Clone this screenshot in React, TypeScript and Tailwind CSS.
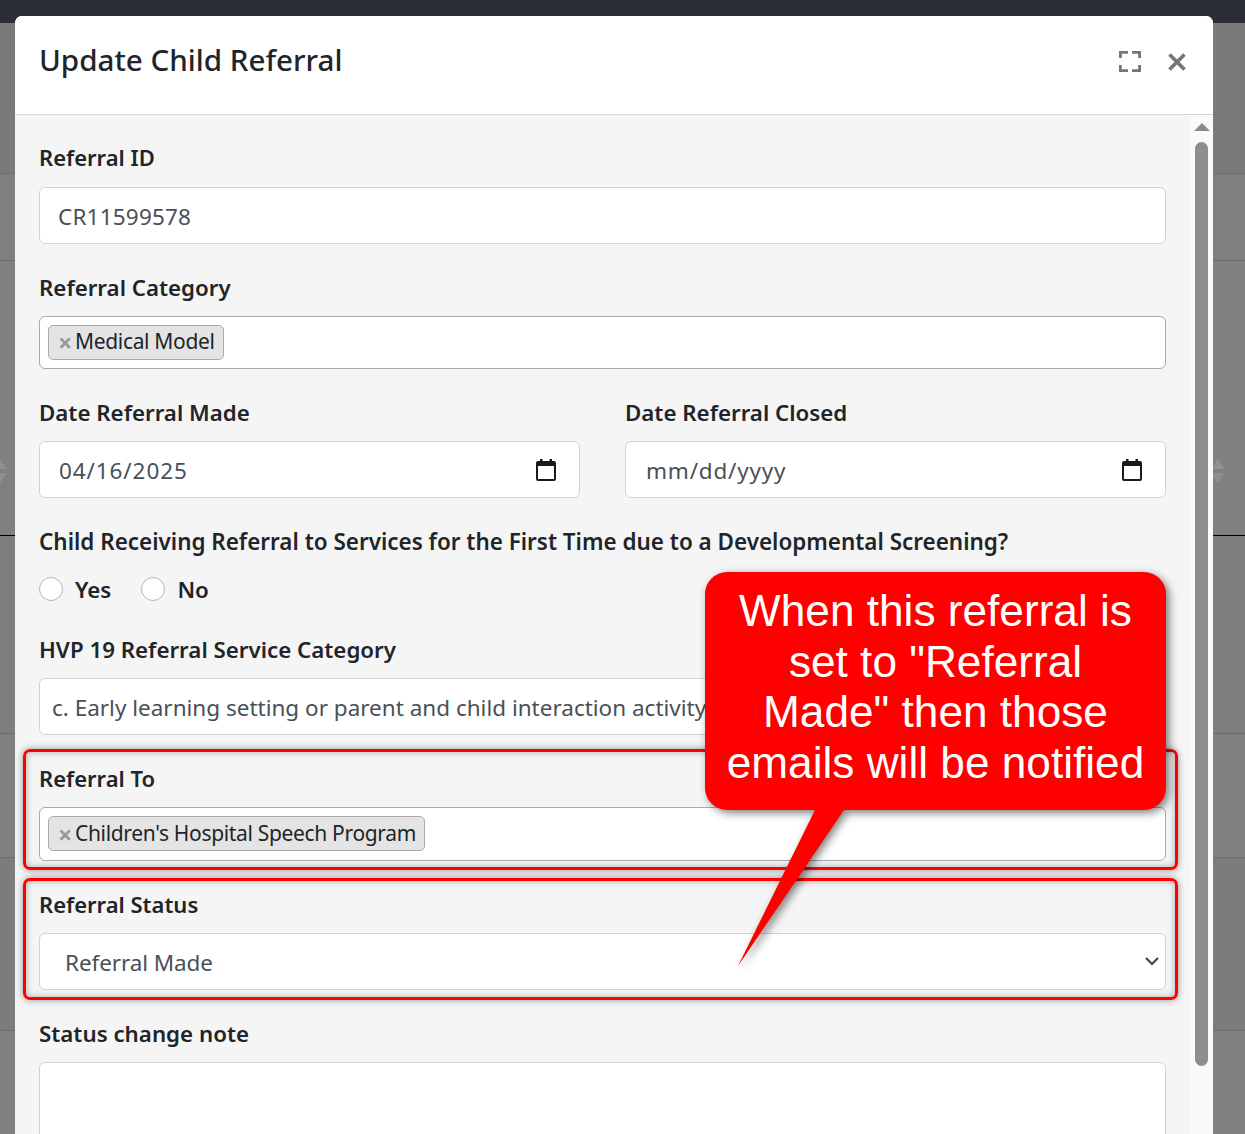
const font = { fontFamily: '"Noto Sans", "Open Sans", sans-serif' };

function Label({ children, className = "text-[22.300px]" }: { children: React.ReactNode; className?: string }) {
  return <div className={`h-[24px] mb-[16px] leading-[24px] font-semibold text-[#212529] whitespace-nowrap ${className}`}>{children}</div>;
}

function TextBox({ children, className = "" }: { children?: React.ReactNode; className?: string }) {
  return (
    <div className={`h-[57px] pt-[2px] bg-white border border-[#ced4da] rounded-[6px] flex items-center text-[22.5px] text-[#495057] whitespace-nowrap ${className}`}>
      {children}
    </div>
  );
}

function Chip({ text, className = "h-[53px]" }: { text: string; className?: string }) {
  return (
    <div className={`bg-white border border-[#aaaaaa] rounded-[6px] flex items-center pl-[8px] ${className}`}>
      <div className="h-[35px] -mt-[1px] flex items-center bg-[#e4e4e4] border border-[#aaaaaa] rounded-[5px] pl-[9px] pr-[8px] text-[21px] tracking-[-0.33px] text-[#212529] whitespace-nowrap">
        <span className="text-[#999999] font-bold mr-[3px] text-[25px] leading-[24px]">×</span>
        {text}
      </div>
    </div>
  );
}

function CalendarIcon() {
  return (
    <svg width="20" height="22" viewBox="0 0 20 22" className="absolute right-[23px] top-[17px]">
      <path d="M4 0h2.500v2h7V0H16v2h2a2 2 0 0 1 2 2v16a2 2 0 0 1-2 2H2a2 2 0 0 1-2-2V4a2 2 0 0 1 2-2h2z M2 7v13h16V7z" fill="#1a1a1a" fillRule="evenodd" />
    </svg>
  );
}

function Radio({ label }: { label: string }) {
  return (
    <div className="flex items-center">
      <span className="w-[24px] h-[24px] rounded-full bg-white border border-[#adb5bd]" />
      <span className="ml-[12px] pt-[2px] text-[22.3px] font-semibold text-[#212529]">{label}</span>
    </div>
  );
}

function Backdrop() {
  return (
    <div className="h-[1134px] flex flex-col bg-[#7b7b7b]">
      <div className="h-[23px] bg-[#2a2d33]" />
      <div className="h-[151px] bg-[#7a7a7a] border-b border-[#6f6f6f]" />
      <div className="h-[87px] bg-[#7f7f7f] border-b border-[#6c6c6c]" />
      <div className="h-[275px] bg-[#808080] border-b border-black" />
      <div className="h-[198px] bg-[#7e7e7e] border-b border-[#6c6c6c]" />
      <div className="h-[124px] bg-[#808080] border-b border-[#6c6c6c]" />
      <div className="h-[173px] bg-[#7c7c7c] border-b border-[#6c6c6c]" />
      <div className="flex-1 bg-[#808080]" />
    </div>
  );
}

function SortArrows({ className }: { className: string }) {
  return (
    <svg width="14" height="24" viewBox="0 0 14 24" className={`absolute top-[459px] ${className}`}>
      <path d="M7 0l7 10H0zM7 24L0 14h14z" fill="#8f8f8f" />
    </svg>
  );
}

function ModalHeader() {
  return (
    <div className="h-[99px] shrink-0 bg-white border-b border-[#d5d5da] flex items-start justify-between pl-[24px] pr-[27px]">
      <div className="mt-[24px] text-[29.6px] leading-[40px] font-medium text-[#212529]">Update Child Referral</div>
      <div className="flex items-center gap-[27px] mt-[35px]">
        <svg width="22" height="21" viewBox="0 0 22 21" fill="none" stroke="#757575" strokeWidth="2.800">
          <path d="M1.400 7V1.400H9M13 1.400h7.600V7M20.600 14v5.600H13M9 19.600H1.400V14" />
        </svg>
        <svg width="18" height="18" viewBox="0 0 18 18" fill="none" stroke="#757575" strokeWidth="3.600">
          <path d="M1.500 1.500l15 15M16.500 1.500l-15 15" />
        </svg>
      </div>
    </div>
  );
}

function Scrollbar() {
  return (
    <div className="w-[23px] shrink-0 bg-[#fafafa] flex flex-col items-center pt-[8px]">
      <svg width="16" height="8" viewBox="0 0 16 8" className="shrink-0">
        <path d="M8 0l8 8H0z" fill="#8a8a8a" />
      </svg>
      <div className="w-[13px] h-[924px] mt-[11px] rounded-full bg-[#8e8e8e] shrink-0" />
    </div>
  );
}

function ReferralForm() {
  return (
    <div className="flex-1 min-w-0 bg-[#f5f5f5] pl-[24px] pr-[24px] pt-[31px]">
      <Label className="text-[22px] !mb-[17px] -translate-y-[1px]">Referral ID</Label>
      <TextBox className="pl-[18px] mb-[32px] tracking-[0.2px]">CR11599578</TextBox>

      <Label>Referral Category</Label>
      <div className="mb-[32px]"><Chip text="Medical Model" /></div>

      <div className="flex gap-[45px] mb-[32px]">
        <div className="flex-1">
          <Label>Date Referral Made</Label>
          <TextBox className="relative pl-[19px] tracking-[0.9px]">04/16/2025<CalendarIcon /></TextBox>
        </div>
        <div className="flex-1">
          <Label>Date Referral Closed</Label>
          <TextBox className="relative pl-[20px] tracking-[0.8px]">mm/dd/yyyy<CalendarIcon /></TextBox>
        </div>
      </div>

      <Label className="text-[22.45px]">Child Receiving Referral to Services for the First Time due to a Developmental Screening?</Label>
      <div className="flex gap-[30px] h-[24px] mt-[23px] mb-[37px]">
        <Radio label="Yes" />
        <Radio label="No" />
      </div>

      <Label>HVP 19 Referral Service Category</Label>
      <TextBox className="pl-[12px] mb-[32px]">c. Early learning setting or parent and child interaction activity</TextBox>

      <Label className="text-[22px] -translate-y-[1px]">Referral To</Label>
      <div className="mb-[32px]"><Chip text="Children's Hospital Speech Program" className="h-[54px]" /></div>

      <Label className="text-[22px] -translate-y-[1px]">Referral Status</Label>
      <TextBox className="pl-[25px] pr-[6px] justify-between mb-[32px] tracking-[-0.1px]">
        Referral Made
        <svg width="14" height="9" viewBox="0 0 14 9" fill="none" stroke="#3f444a" strokeWidth="2" className="relative -top-[1px]">
          <path d="M1 1l6 6 6-6" />
        </svg>
      </TextBox>

      <Label>Status change note</Label>
      <div className="h-[200px] bg-white border border-[#ced4da] rounded-[6px]" />
    </div>
  );
}

function Callout() {
  return (
    <>
      <svg width="1245" height="1134" viewBox="0 0 1245 1134" className="absolute left-0 top-0 pointer-events-none drop-shadow-[3px_3px_4px_rgba(0,0,0,0.5)]">
        <path d="M727 572H1144a22 22 0 0 1 22 22V788a22 22 0 0 1-22 22H844L738 966L815 810H727a22 22 0 0 1-22-22V594a22 22 0 0 1 22-22z" fill="#ff0000" />
      </svg>
      <div className="absolute left-[705px] top-[586px] w-[461px] text-center text-white text-[44.2px] leading-[50.700px]" style={{ fontFamily: '"Liberation Sans", Arial, sans-serif' }}>
        When this referral is<br />set to "Referral<br />Made" then those<br />emails will be notified
      </div>
    </>
  );
}

export default function App() {
  return (
    <div className="relative w-[1245px] h-[1134px] overflow-hidden" style={font}>
      <Backdrop />
      <SortArrows className="left-[-7px]" />
      <SortArrows className="left-[1211px]" />

      <div className="absolute left-[15px] top-[16px] w-[1198px] h-[1118px] flex flex-col bg-white rounded-t-[7px] overflow-hidden">
        <ModalHeader />
        <div className="flex-1 flex min-h-0 overflow-hidden">
          <ReferralForm />
          <Scrollbar />
        </div>
      </div>

      <div className="absolute left-[23px] top-[749px] w-[1155px] h-[121px] border-[3px] border-[#ff0000] rounded-[7px] shadow-[0_0_7px_rgba(0,0,0,0.4),inset_0_0_7px_rgba(0,0,0,0.3)]" />
      <div className="absolute left-[23px] top-[878px] w-[1155px] h-[122px] border-[3px] border-[#ff0000] rounded-[7px] shadow-[0_0_7px_rgba(0,0,0,0.4),inset_0_0_7px_rgba(0,0,0,0.3)]" />

      <Callout />
    </div>
  );
}
